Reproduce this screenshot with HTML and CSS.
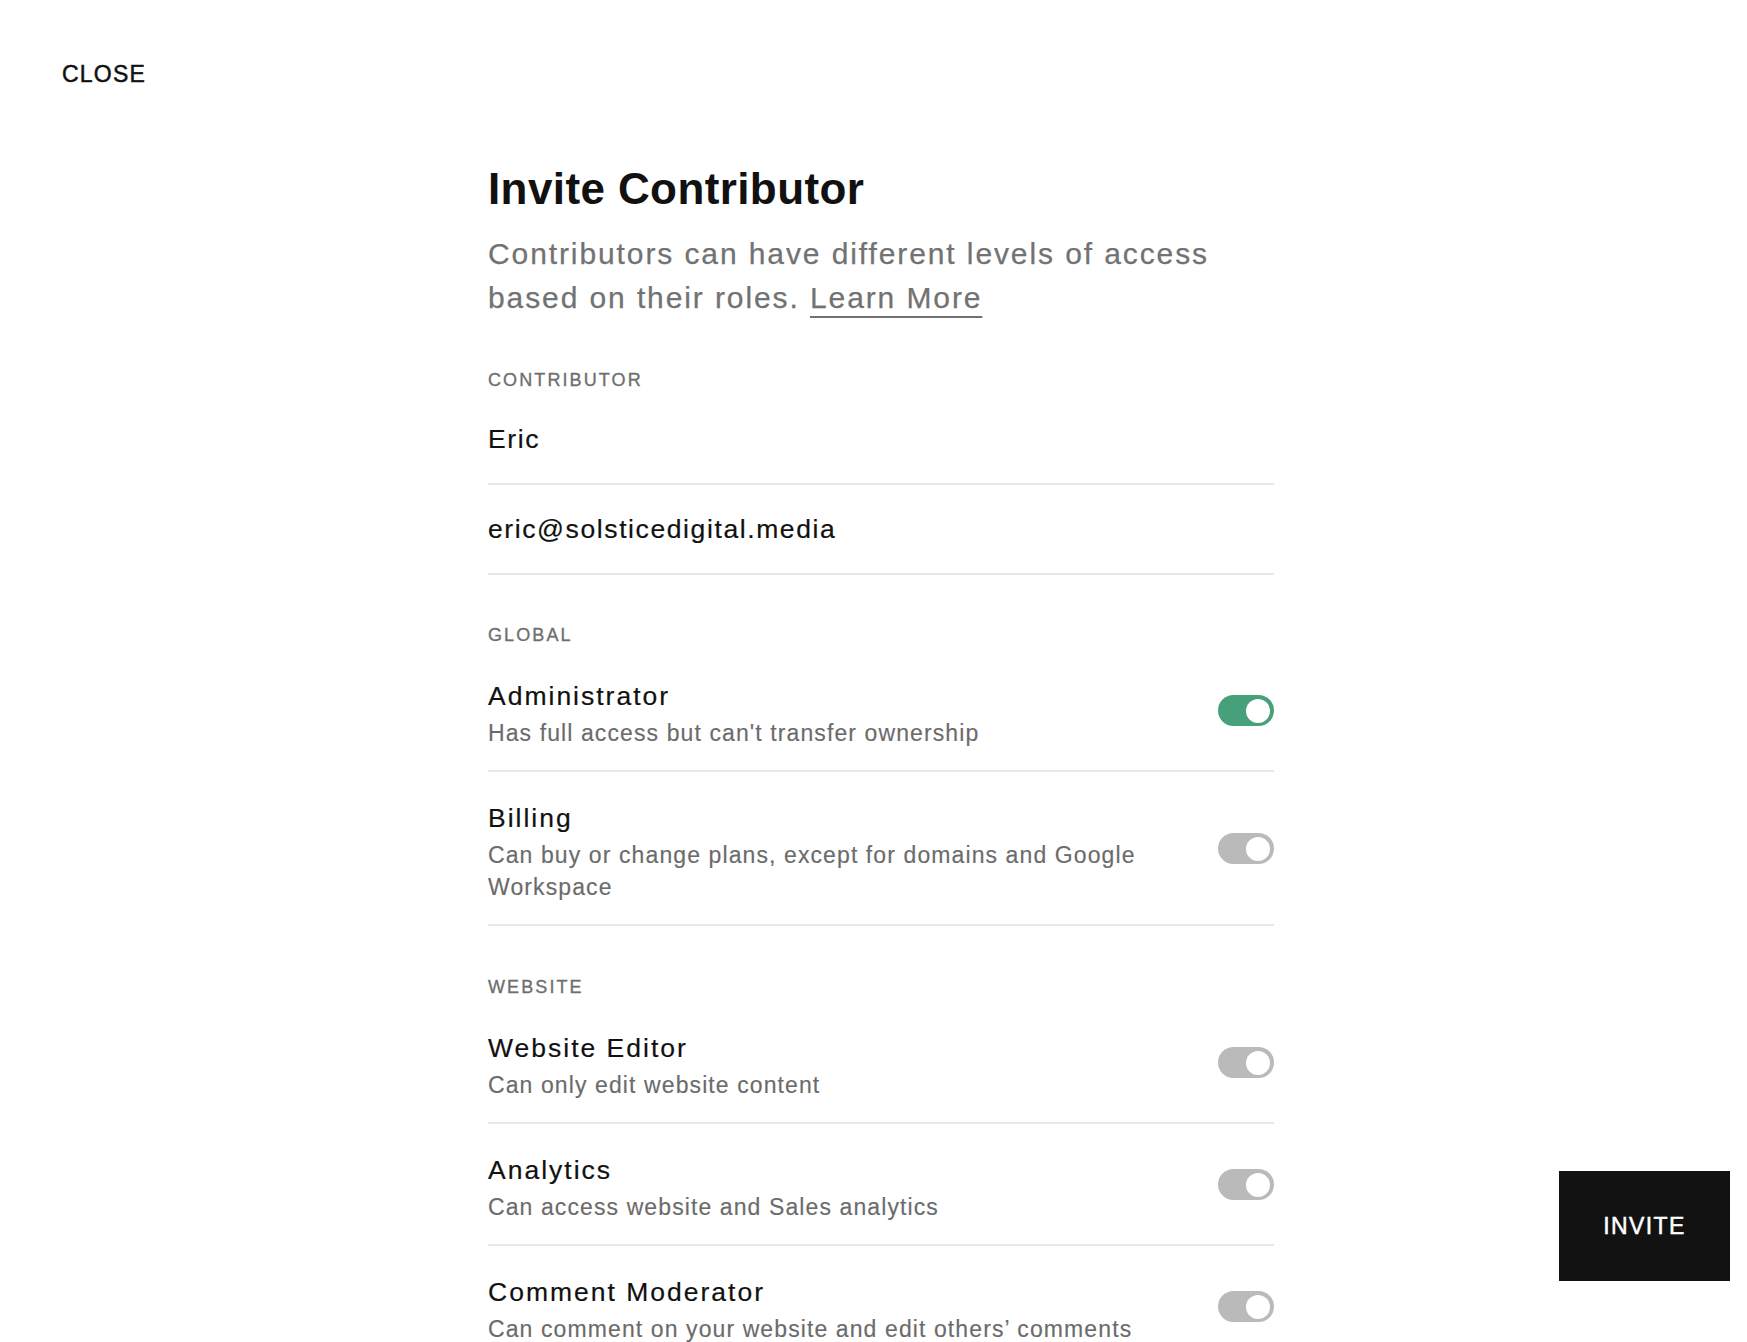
FILE: index.html
```html
<!DOCTYPE html>
<html lang="en">
<head>
<meta charset="utf-8">
<title>Invite Contributor</title>
<link rel="stylesheet" href="styles.css">
</head>
<body>
<header class="topbar">
  <a class="close">CLOSE</a>
</header>
<div class="wrap">
  <main class="panel">
    <h1 class="title">Invite Contributor</h1>
    <p class="lead">Contributors can have different levels of access based on their roles. <a class="learn">Learn More</a></p>

    <section class="group group-contributor">
      <div class="label">CONTRIBUTOR</div>
      <div class="field">Eric</div>
      <div class="field">eric@solsticedigital.media</div>
    </section>

    <section class="group group-global">
      <div class="label">GLOBAL</div>
      <div class="role">
        <div class="role-text">
          <div class="role-name">Administrator</div>
          <div class="role-desc">Has full access but can't transfer ownership</div>
        </div>
        <span class="toggle on"></span>
      </div>
      <div class="role">
        <div class="role-text">
          <div class="role-name">Billing</div>
          <div class="role-desc">Can buy or change plans, except for domains and Google Workspace</div>
        </div>
        <span class="toggle"></span>
      </div>
    </section>

    <section class="group group-website">
      <div class="label">WEBSITE</div>
      <div class="role">
        <div class="role-text">
          <div class="role-name">Website Editor</div>
          <div class="role-desc">Can only edit website content</div>
        </div>
        <span class="toggle"></span>
      </div>
      <div class="role">
        <div class="role-text">
          <div class="role-name">Analytics</div>
          <div class="role-desc">Can access website and Sales analytics</div>
        </div>
        <span class="toggle"></span>
      </div>
      <div class="role">
        <div class="role-text">
          <div class="role-name">Comment Moderator</div>
          <div class="role-desc">Can comment on your website and edit others’ comments</div>
        </div>
        <span class="toggle"></span>
      </div>
    </section>
  </main>
</div>
<button class="invite">INVITE</button>
</body>
</html>
```

FILE: styles.css
```css
html {
  overflow: hidden;
}

body {
  margin: 0;
  background: #ffffff;
  color: #111111;
  font-family: "Liberation Sans", Arial, sans-serif;
}

.topbar {
  padding: 63px 0 0 62px;
}

.close {
  display: inline-block;
  font-size: 23px;
  line-height: 23px;
  letter-spacing: 1.2px;
  color: #111111;
  -webkit-text-stroke: 0.5px #111111;
}

.wrap {
  padding-left: 15px;
}

.panel {
  width: 786px;
  margin: 77px auto 0;
}

.title {
  margin: 0;
  font-size: 44px;
  line-height: 52px;
  font-weight: 700;
  letter-spacing: 0.4px;
  color: #111111;
}

.lead {
  margin: 17px 0 0;
  font-size: 30px;
  line-height: 44px;
  letter-spacing: 1.9px;
  color: #727272;
  -webkit-text-stroke: 0.25px #727272;
}

.learn {
  color: #727272;
  text-decoration: underline;
  text-decoration-thickness: 2px;
  text-underline-offset: 8px;
}

.group-contributor {
  margin-top: 51px;
}

.group-global {
  margin-top: 51px;
}

.group-website {
  margin-top: 52px;
}

.label {
  font-size: 18px;
  line-height: 18px;
  letter-spacing: 2.1px;
  color: #6f6f6f;
  margin-bottom: 6px;
  -webkit-text-stroke: 0.35px #6f6f6f;
}

.field {
  padding: 29px 0;
  font-size: 26.5px;
  line-height: 30px;
  letter-spacing: 1.6px;
  color: #111111;
  -webkit-text-stroke: 0.2px #111111;
  border-bottom: 2px solid #e8e8e8;
}

.role {
  display: flex;
  align-items: center;
  gap: 40px;
  padding: 30px 0 21px;
  border-bottom: 2px solid #e8e8e8;
}

.role-text {
  flex: 1;
  max-width: 700px;
}

.role-name {
  font-size: 26.5px;
  line-height: 32px;
  letter-spacing: 2px;
  color: #111111;
  -webkit-text-stroke: 0.2px #111111;
}

.role-desc {
  margin-top: 5px;
  font-size: 23px;
  line-height: 32px;
  letter-spacing: 1.1px;
  color: #6b6b6b;
  -webkit-text-stroke: 0.15px #6b6b6b;
}

.toggle {
  flex: none;
  display: flex;
  align-items: center;
  justify-content: flex-end;
  box-sizing: border-box;
  width: 56px;
  height: 31px;
  padding: 0 4px;
  margin-bottom: 8px;
  border-radius: 16px;
  background: #bababa;
}

.toggle::after {
  content: "";
  width: 24px;
  height: 24px;
  border-radius: 50%;
  background: #ffffff;
}

.toggle.on {
  background: #46a079;
}

.invite {
  position: fixed;
  right: 17px;
  bottom: 61px;
  width: 171px;
  height: 110px;
  border: none;
  background: #121212;
  color: #ffffff;
  font-family: "Liberation Sans", Arial, sans-serif;
  font-size: 23px;
  letter-spacing: 1.4px;
  -webkit-text-stroke: 0.5px #ffffff;
  padding: 0;
}
```
